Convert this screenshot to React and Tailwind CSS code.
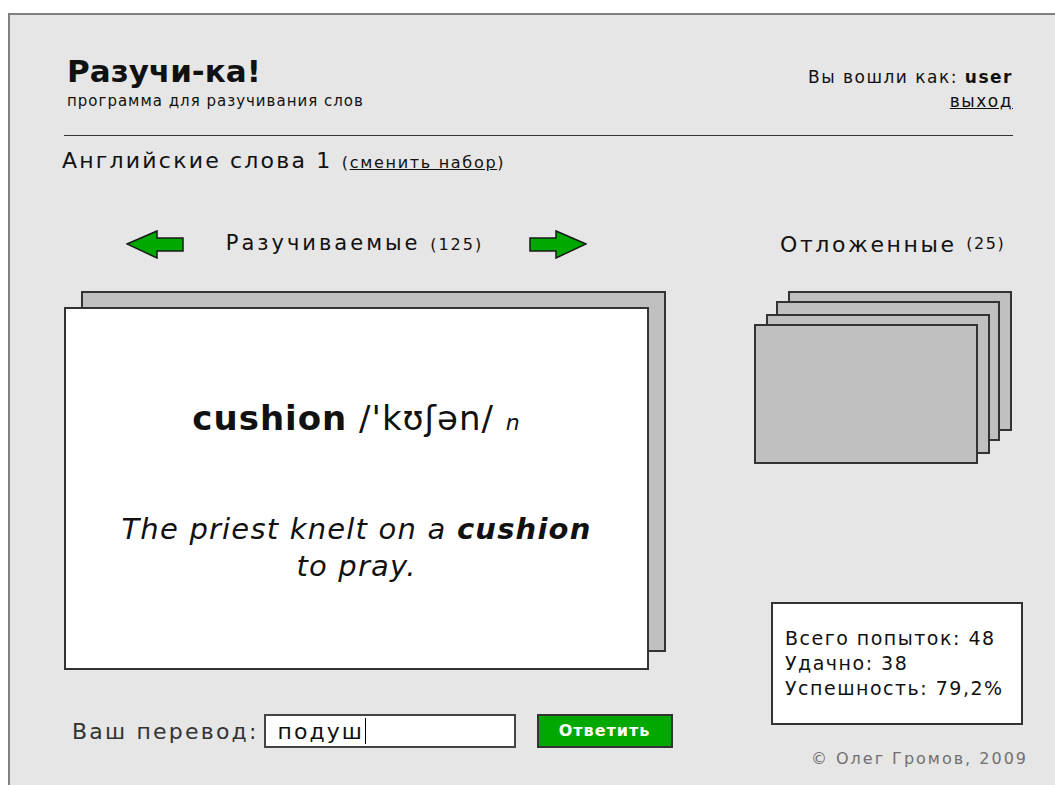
const font = { fontFamily: '"DejaVu Sans", Verdana, sans-serif' }

const Arrow = ({ dir }) => (
  <svg width="60" height="30" viewBox="0 0 60 30" className={`shrink-0 ${dir === 'right' ? 'scale-x-[-1]' : ''}`}>
    <path d="M1 15 L31 2 L31 9 L57 9 L57 22 L31 22 L31 29 Z" fill="#00a800" stroke="#1a1a1a" strokeWidth="1.5" />
  </svg>
)

const Card = ({ className = '' }) => (
  <div className={`absolute w-[224px] h-[140px] bg-[#c0c0c0] border-2 border-[#333] ${className}`} />
)

export default function App() {
  return (
    <div className="min-h-screen bg-white overflow-hidden pt-[13px] pl-[8px] text-[#111]" style={font}>
      <div className="w-[1100px] h-[772px] bg-[#e6e6e6] border-l-2 border-t-2 border-[#808080]">
        <div className="pl-[54px]">
          {/* header */}
          <div className="w-[949px] flex justify-between items-start pt-[38px]">
            <div className="pl-[3px]">
              <h1 className="text-[31px] leading-[36px] font-bold">Разучи-ка!</h1>
              <p className="mt-[3px] text-[15px] leading-[18px] tracking-[1px]">программа для разучивания слов</p>
            </div>
            <div className="text-right text-[17px] leading-[24px] tracking-[1.5px] pt-[12px]">
              <div>Вы вошли как: <b>user</b></div>
              <a href="#" className="underline">выход</a>
            </div>
          </div>
          <div className="mt-[22px] h-px bg-[#333] w-[949px]" />

          <div className="mt-[11px] text-[22px] leading-[28px] tracking-[2.2px] -ml-[2px] whitespace-nowrap">
            Английские слова 1{' '}
            <span className="text-[16px] tracking-[1.7px]">(<a href="#" className="underline">сменить набор</a>)</span>
          </div>

          <div className="flex mt-[52px]">
            {/* words being learned */}
            <div className="w-[602px] shrink-0">
              <div className="w-[585px] flex items-center justify-center h-[30px]">
                <Arrow dir="left" />
                <div className="ml-[40px] mr-[44px] text-[21px] tracking-[3px] whitespace-nowrap">
                  Разучиваемые <span className="text-[16px] tracking-[2px]">(125)</span>
                </div>
                <Arrow dir="right" />
              </div>

              <div className="relative mt-[32px] pt-[16px]">
                <div className="absolute left-[17px] top-0 w-[585px] h-[361px] bg-[#c0c0c0] border-2 border-[#333]" />
                <div className="relative w-[585px] h-[363px] bg-white border-2 border-[#333] flex flex-col items-center text-center pt-[89px]">
                  <div className="text-[34px] leading-[40px] tracking-[1px]">
                    <b>cushion</b> /'kʊʃən/ <i className="text-[22px]">n</i>
                  </div>
                  <div className="mt-[68px] text-[29px] leading-[37px] tracking-[1.2px] italic">
                    The priest knelt on a <b>cushion</b>
                    <br />
                    to pray.
                  </div>
                </div>
              </div>

              <div className="flex items-center mt-[44px] ml-[8px] whitespace-nowrap">
                <span className="shrink-0 text-[22px] text-[#333] tracking-[2.2px]">Ваш перевод:</span>
                <div className="shrink-0 ml-[5px] w-[252px] h-[34px] bg-white border-2 border-[#444] pl-[12px] flex items-center text-[22px] tracking-[2px]">
                  подуш<span className="ml-[1px] w-px h-[26px] bg-black" />
                </div>
                <button className="shrink-0 ml-[21px] w-[136px] h-[34px] bg-[#00a800] border-2 border-[#333] text-white text-[16px] font-bold tracking-[1px]">
                  Ответить
                </button>
              </div>
            </div>

            {/* postponed words */}
            <div className="ml-[88px] w-[274px] shrink-0 flex flex-col">
              <div className="text-[22px] tracking-[2.6px] pl-[26px] h-[30px] flex items-center whitespace-nowrap">
                Отложенные&nbsp;<span className="text-[16px] tracking-[1.5px]">(25)</span>
              </div>
              <div className="relative mt-[32px] h-[173px] w-[258px]">
                <Card className="left-[34px] top-0" />
                <Card className="left-[22px] top-[10px]" />
                <Card className="left-[12px] top-[23px]" />
                <Card className="left-0 top-[33px]" />
              </div>
              <div className="mt-[138px] ml-[17px] w-[252px] h-[123px] bg-white border-2 border-[#333] px-[12px] pt-[22px] text-[19px] leading-[25px] tracking-[1.5px]">
                <div>Всего попыток: 48</div>
                <div>Удачно: 38</div>
                <div>Успешность: 79,2%</div>
              </div>
              <div className="mt-[22px] text-right text-[16px] text-[#707070] tracking-[2px] whitespace-nowrap">© Олег Громов, 2009</div>
            </div>
          </div>
        </div>
      </div>
    </div>
  )
}
